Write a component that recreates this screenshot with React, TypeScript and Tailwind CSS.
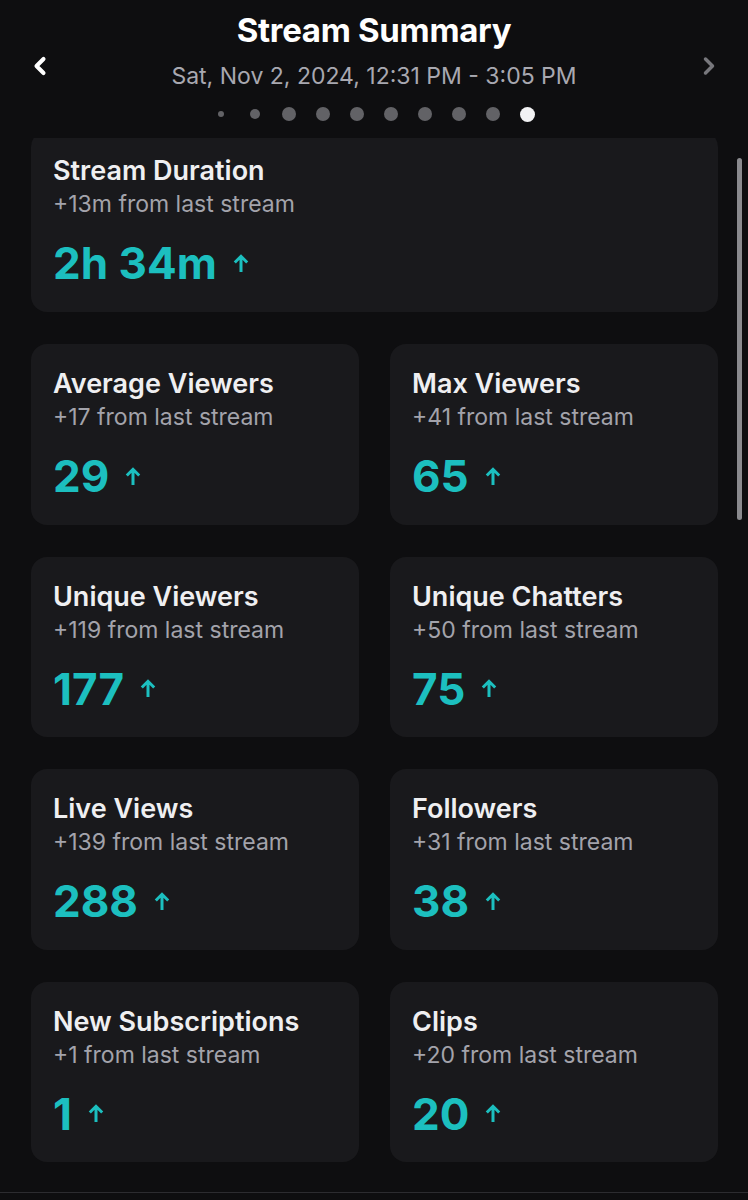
import { ChevronLeft, ChevronRight } from "lucide-react";

interface Stat {
  title: string;
  delta: string;
  value: string;
}

const STATS: Stat[] = [
  { title: "Average Viewers", delta: "+17", value: "29" },
  { title: "Max Viewers", delta: "+41", value: "65" },
  { title: "Unique Viewers", delta: "+119", value: "177" },
  { title: "Unique Chatters", delta: "+50", value: "75" },
  { title: "Live Views", delta: "+139", value: "288" },
  { title: "Followers", delta: "+31", value: "38" },
  { title: "New Subscriptions", delta: "+1", value: "1" },
  { title: "Clips", delta: "+20", value: "20" },
];

/** 위쪽 화살표 (증가 표시) */
function UpArrow() {
  return (
    <svg width="16" height="19" viewBox="0 0 16 19" fill="none" className="shrink-0">
      <path d="M8 18V2.5M1.8 8.5L8 2.3l6.2 6.2" stroke="#1cbfbf" strokeWidth="3" />
    </svg>
  );
}

function StatCard({ stat, className = "" }: { stat: Stat; className?: string }) {
  return (
    <div className={`flex flex-col bg-[#19191c] px-[22px] pt-[25px] ${className}`}>
      <span className="text-[27px] leading-[30px] font-semibold text-[#efeff1]">{stat.title}</span>
      <span className="text-[23px] leading-[36px] text-[#a3a3ab]">
        {stat.delta} from last stream
      </span>
      <div className="mt-[17px] flex items-center gap-4">
        <span className="text-[44px] leading-[48px] font-bold text-[#1cbfbf]">{stat.value}</span>
        <UpArrow />
      </div>
    </div>
  );
}

export default function App() {
  const dots = [6, 10, 14, 14, 14, 14, 14, 14, 14];
  return (
    <div
      className="flex h-[1200px] w-[748px] flex-col overflow-hidden bg-[#0e0e10]"
      style={{ fontFamily: "Inter, 'Noto Sans', sans-serif" }}
    >
      {/* 헤더 */}
      <header className="relative flex flex-col items-center pt-[12px]">
        <h1 className="text-[33px] leading-[36px] font-bold tracking-[-0.3px] text-white">
          Stream Summary
        </h1>
        <p className="mt-[14px] text-[23px] leading-[28px] text-[#a8a8b0]">
          Sat, Nov 2, 2024, 12:31 PM - 3:05 PM
        </p>
        <div className="mt-[14px] flex h-[20px] items-center gap-[20px]">
          {dots.map((d, i) => (
            <span
              key={i}
              className={`rounded-full bg-[#626266] ${
                d === 6 ? "h-[6px] w-[6px] mx-[4px]" : d === 10 ? "h-[10px] w-[10px] mx-[2px]" : "h-[14px] w-[14px]"
              }`}
            />
          ))}
          <span className="h-[15px] w-[15px] rounded-full bg-[#f2f2f4]" />
        </div>
        <ChevronLeft
          size={28}
          strokeWidth={3.5}
          className="absolute left-[26px] top-[52px] text-white"
        />
        <ChevronRight
          size={28}
          strokeWidth={3}
          className="absolute right-[25px] top-[52px] text-[#77777c]"
        />
      </header>

      {/* 스크롤 영역 */}
      <div className="relative mt-[14px] flex-1 overflow-hidden">
        <div className="-mt-[7px] flex flex-col gap-8 pl-[31px] pr-[30px]">
          <div className="flex h-[181px] flex-col rounded-2xl bg-[#19191c] px-[22px] pt-[25px]">
            <span className="text-[27px] leading-[30px] font-semibold text-[#efeff1]">
              Stream Duration
            </span>
            <span className="text-[23px] leading-[36px] text-[#a3a3ab]">
              +13m from last stream
            </span>
            <div className="mt-[17px] flex items-center gap-4">
              <span className="text-[44px] leading-[48px] font-bold text-[#1cbfbf]">2h 34m</span>
              <UpArrow />
            </div>
          </div>
          <div className="grid grid-cols-2 gap-x-[31px] gap-y-8">
            {STATS.map((s) => (
              <StatCard key={s.title} stat={s} className="h-[180.5px] rounded-2xl" />
            ))}
          </div>
        </div>
        {/* 스크롤바 */}
        <div className="absolute right-[6px] top-[20px] h-[362px] w-[5px] rounded-full bg-[#8a8a8e]" />
      </div>
      <div className="h-[8px] border-t border-[#2c2c30]" />
    </div>
  );
}
